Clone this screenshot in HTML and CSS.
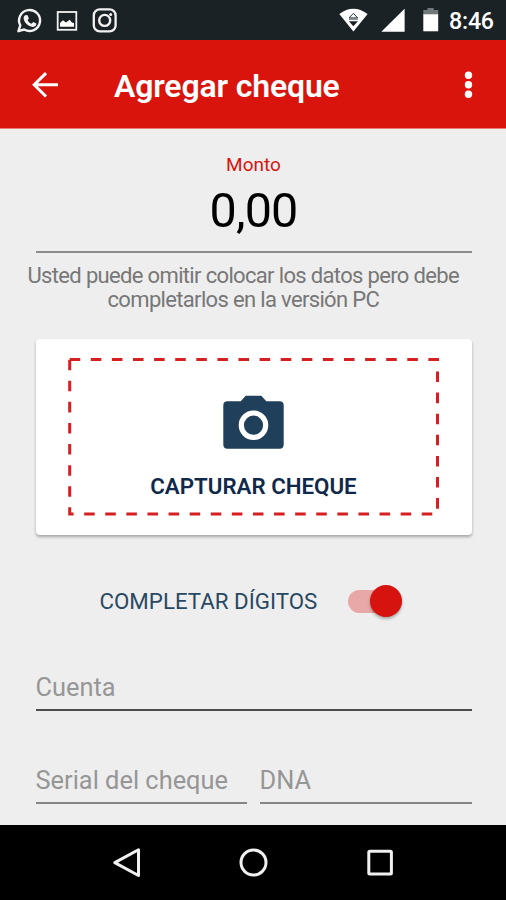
FILE: index.html
```html
<!DOCTYPE html>
<html lang="es">
<head>
<meta charset="utf-8">
<title>Agregar cheque</title>
<link rel="stylesheet" href="styles.css">
</head>
<body>
<div class="status">
  <svg class="notifications" width="91" height="40" viewBox="0 0 91 40" fill="none" stroke="#f2f2f2">
    <path d="M18.400 31.200L20.300 25.400A10.500 10.500 0 1 1 24.200 29.500Z" stroke-width="2.400" stroke-linejoin="round"/>
    <path d="M25.600 14.900l2 .4 1.300 3.200-1.300 1.700c1 1.800 2.300 2.900 4 3.600l1.700-1.700 3 1.500c.3 2.100-1.500 3.500-3.700 3.300-4.400-.5-8.700-4.700-9-8.700 0-1.500.8-2.800 2-3.300z" fill="#f2f2f2" stroke="none"/>
    <rect x="57.700" y="12" width="18.600" height="17.800" stroke-width="1.800"/>
    <path d="M60 26.700v-3.600l3-2.900 3 2.400 3.800-2.800 1.800 2.400 2.400 1v3.500z" fill="#fff" stroke="none"/>
  </svg>
  <svg class="camera-app" width="26" height="26" viewBox="0 -.6 26 26" fill="none" stroke="#f2f2f2">
    <rect x="1.800" y="1.800" width="21.800" height="22" rx="6" stroke-width="2.300"/>
    <circle cx="12.700" cy="12.800" r="5.500" stroke-width="2.400"/>
    <circle cx="18.700" cy="6.900" r="1.500" fill="#f2f2f2" stroke="none"/>
  </svg>
  <svg class="system" width="102" height="40" viewBox="338 0 102 40">
    <path d="M339.300 14Q353.300 3.500 367.600 14L353.400 31.600Z" fill="#fff"/>
    <path d="M353.400 13.300l4.300 4.600h-8.600z" fill="#fff" stroke="#273238" stroke-width="1"/>
    <path d="M349 18.200h8.800v1.700h-8.800z" fill="#7b8286"/>
    <path d="M348.900 21.300h9l-4.500 5z" fill="#172126"/>
    <path d="M381.300 31.700L404.600 8.700V31.700Z" fill="#fff"/>
    <path d="M423.300 15v-5h4.200V8h6.200v2h4.500v5z" fill="#72797c"/>
    <path d="M423.300 14.300h14.900v17h-14.900z" fill="#fff"/>
  </svg>
  <span class="clock">8:46</span>
</div>
<header class="bar">
  <svg class="back" width="28" height="28" viewBox="0 0 28 28" fill="none" stroke="#fff" stroke-width="3"><path d="M16 3.100L4.200 14.800 16 26.500M4.200 14.800H28"/></svg>
  <h1>Agregar cheque</h1>
  <svg class="more" width="10" height="28" viewBox="0 0 10 28" fill="#fff"><circle cx="4.500" cy="5.300" r="3.700"/><circle cx="4.500" cy="14.800" r="3.700"/><circle cx="4.500" cy="24.200" r="3.700"/></svg>
</header>
<main>
  <div class="amount">
    <label>Monto</label>
    <div class="value">0,00</div>
  </div>
  <p class="hint"><span class="line first">Usted puede omitir colocar los datos pero debe</span><span class="line second">completarlos en la versión PC</span></p>
  <section class="card">
    <svg width="374" height="160" viewBox="67 357 374 160" fill="none">
      <path d="M69.700 359.500H437.500V514H69.700Z" stroke="#d51f20" stroke-width="3" stroke-dasharray="10.550 10.550"/>
      <path d="M227.500 401.200h13.200l5-5.400h15.600l5 5.400h13.200q4.200 0 4.200 4.200v39.200q0 4.200-4.200 4.200h-52q-4.200 0-4.200-4.200v-39.200q0-4.200 4.200-4.200z" fill="#203f5a"/>
      <circle cx="253.500" cy="425.200" r="12.200" stroke="#fff" stroke-width="5.200"/>
    </svg>
    <span class="capture">CAPTURAR CHEQUE</span>
  </section>
  <div class="toggle">
    <span>COMPLETAR DÍGITOS</span>
    <div class="track"><div class="thumb"></div></div>
  </div>
  <div class="field account"><span>Cuenta</span></div>
  <div class="pair">
    <div class="field serial"><span>Serial del cheque</span></div>
    <div class="field dna"><span>DNA</span></div>
  </div>
</main>
<nav>
  <svg width="30" height="32" viewBox="0 0 30 32" fill="none" stroke="#f0f0f0" stroke-width="3"><path d="M26.500 2.700V28.500L2.800 15.600Z" stroke-linejoin="round"/></svg>
  <svg width="30" height="32" viewBox="0 0 30 32" fill="none" stroke="#f0f0f0" stroke-width="3"><circle cx="14.500" cy="15.500" r="12.500"/></svg>
  <svg width="30" height="32" viewBox="0 0 30 32" fill="none" stroke="#f0f0f0" stroke-width="3"><rect x="3.800" y="4.200" width="22.600" height="22.800" rx="1"/></svg>
</nav>
</body>
</html>
```
FILE: styles.css
```css
* { box-sizing: border-box; }
body {
  margin: 0;
  width: 506px;
  height: 900px;
  display: flex;
  flex-direction: column;
  background: #eee;
  font-family: Roboto, "Liberation Sans", sans-serif;
  overflow: hidden;
}
svg { display: block; flex: none; }
span, h1 { white-space: nowrap; }
.status {
  height: 40px;
  flex: none;
  display: flex;
  align-items: center;
  background: #1a2226;
  color: #fff;
}
.camera-app { margin-left: 1px; }
.system { margin-left: 220px; }
.clock {
  margin: 2px 0 0 9px;
  font-size: 23.2px;
  font-weight: 500;
  line-height: 26px;
  letter-spacing: -.2px;
}
.bar {
  height: 89px;
  flex: none;
  display: flex;
  align-items: center;
  padding: 0 32px 0 30px;
  background: #d9140c;
  border-bottom: 1px solid #eb7b76;
  color: #fff;
}
.bar h1 {
  margin: 4px 0 0 56px;
  font-size: 32px;
  font-weight: 600;
  line-height: 40px;
  letter-spacing: -.15px;
}
.more { margin-left: auto; }
main {
  height: 696px;
  flex: none;
  padding: 22px 34.500px 0 35.500px;
  display: flex;
  flex-direction: column;
}
.amount {
  height: 102px;
  flex: none;
  display: flex;
  flex-direction: column;
  align-items: center;
  border-bottom: 2px solid #8c8c8c;
}
.amount label {
  margin-top: 1px;
  font-size: 19px;
  line-height: 26px;
  color: #d9140c;
}
.value {
  margin-top: 3px;
  font-size: 48.5px;
  line-height: 60px;
  letter-spacing: -.8px;
  color: #000;
}
.hint {
  margin: 11px -14px 0 -8px;
  display: flex;
  flex-direction: column;
  font-size: 22px;
  line-height: 24px;
  letter-spacing: -.66px;
  color: #777;
}
.second { margin-left: 80px; }
.card {
  margin-top: 27px;
  height: 196px;
  flex: none;
  display: grid;
  justify-items: center;
  padding-top: 18px;
  background: #fff;
  border-radius: 4px;
  box-shadow: 0 2px 3px rgba(0, 0, 0, .3);
}
.card > * { grid-area: 1 / 1; }
.capture {
  margin-top: 115px;
  font-size: 22.3px;
  font-weight: 600;
  line-height: 28px;
  color: #10294b;
}
.toggle {
  margin: 49px 0 0 64px;
  height: 34px;
  display: flex;
  align-items: center;
  font-size: 22.3px;
  color: #294862;
}
.toggle span { width: 217px; }
.track {
  margin-left: 31.500px;
  width: 54px;
  height: 23px;
  display: flex;
  align-items: center;
  justify-content: flex-end;
  border-radius: 12px;
  background: #e9a8a8;
}
.thumb {
  flex: none;
  width: 32px;
  height: 32px;
  border-radius: 50%;
  background: #d6130f;
  box-shadow: 0 2px 3px rgba(0, 0, 0, .3);
}
.field {
  height: 40px;
  border-bottom: 2px solid #858585;
  font-size: 25.4px;
  line-height: 32px;
  color: #969696;
}
.account {
  margin-top: 53px;
  border-color: #4c4c4c;
}
.pair {
  margin-top: 53px;
  display: grid;
  grid-template-columns: 211px 212px;
  column-gap: 13px;
}
nav {
  height: 75px;
  flex: none;
  display: flex;
  justify-content: space-between;
  align-items: center;
  padding: 0 111px 0 112px;
  background: #000;
}
```
